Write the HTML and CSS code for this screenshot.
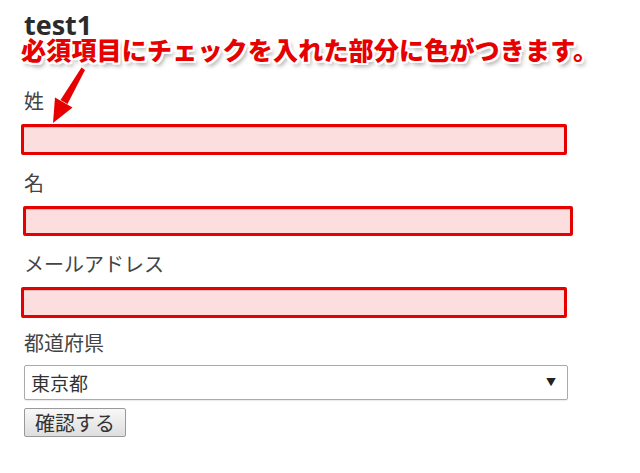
FILE: index.html
```html
<!DOCTYPE html>
<html lang="ja">

<head>
    <meta charset="UTF-8">
    <meta name="viewport" content="width=device-width, initial-scale=1.0">
    <title>test1</title>
    <link rel="stylesheet" href="styles.css">
</head>

<body>
    <div class="page">
        <h1>test1</h1>

        <!-- annotation overlay -->
        <p class="note">必須項目にチェックを入れた部分に色がつきます。</p>
        <svg class="note-arrow" width="60" height="70" viewBox="0 0 60 70">
            <polygon points="37.5,7.5 41,10 23.5,44 16.5,40" fill="#e60000"/>
            <polygon points="9,63 11,37.5 28.5,47.5" fill="#e60000"/>
        </svg>

        <form class="form">
            <div class="field">
                <label>姓</label>
                <input type="text" class="required">
            </div>
            <div class="field">
                <label>名</label>
                <input type="text" class="required wide">
            </div>
            <div class="field">
                <label>メールアドレス</label>
                <input type="text" class="required">
            </div>
            <div class="field field-select">
                <label>都道府県</label>
                <div class="select-wrap">
                    <select>
                        <option>東京都</option>
                    </select>
                </div>
            </div>
            <button type="button" class="submit">確認する</button>
        </form>
    </div>
</body>

</html>
```

FILE: styles.css
```css
body {
    margin: 0;
    padding: 0;
    background-color: #fff;
    font-family: "Noto Sans CJK JP", "Open Sans", sans-serif;
    color: #333;
}

.page {
    position: relative;
    padding: 10px 24px;
}

h1 {
    margin: 0;
    font-family: "Open Sans", sans-serif;
    font-weight: 700;
    font-size: 27px;
    line-height: 30px;
    color: #2b2b2b;
}

.note {
    position: absolute;
    left: 21px;
    top: 32px;
    margin: 0;
    font-size: 25px;
    font-weight: 900;
    line-height: 34px;
    letter-spacing: 0.2px;
    color: #e60000;
    text-shadow:
        -2px 0 0 #fff, 2px 0 0 #fff, 0 -2px 0 #fff, 0 2px 0 #fff,
        -2px -2px 0 #fff, 2px 2px 0 #fff, -2px 2px 0 #fff, 2px -2px 0 #fff,
        3px 4px 4px rgba(0, 0, 0, 0.35);
}

.note-arrow {
    position: absolute;
    left: 44px;
    top: 60px;
}

.form {
    margin-top: 48px;
    display: flex;
    flex-direction: column;
    align-items: flex-start;
}

.field {
    display: flex;
    flex-direction: column;
    align-items: flex-start;
    gap: 10px;
    margin-bottom: 15px;
}

.field label {
    font-size: 20px;
    line-height: 26px;
    font-weight: 400;
    color: #444;
}

.field-select {
    margin-top: -3px;
    gap: 9px;
}

input.required {
    box-sizing: border-box;
    width: 546px;
    height: 31px;
    margin-left: -3px;
    border: 3px solid #e60000;
    border-radius: 2px;
    background: #fddede;
    box-shadow: inset 0 1px 0 #d8bcbc;
    outline: none;
}

input.wide {
    width: 550px;
    height: 30px;
    margin-left: -1px;
}

.select-wrap {
    position: relative;
}

.select-wrap select {
    box-sizing: border-box;
    width: 544px;
    height: 35px;
    padding: 0 6px;
    margin: 0;
    border: 1px solid #aaa;
    border-radius: 2px;
    background: #fff;
    font-family: inherit;
    font-size: 19px;
    color: #333;
    appearance: none;
    -webkit-appearance: none;
    box-shadow: 0 1px 1px rgba(0, 0, 0, 0.08);
}

.select-wrap::after {
    content: "▼";
    position: absolute;
    right: 12px;
    top: 11px;
    font-size: 10px;
    line-height: 12px;
    color: #222;
    pointer-events: none;
}

.submit {
    box-sizing: border-box;
    width: 102px;
    height: 29px;
    margin-top: -7px;
    padding: 0;
    border: 1px solid #999;
    border-radius: 2px;
    background: linear-gradient(#f8f8f8, #dedede);
    font-family: inherit;
    font-size: 20px;
    line-height: 26px;
    color: #333;
}
```
